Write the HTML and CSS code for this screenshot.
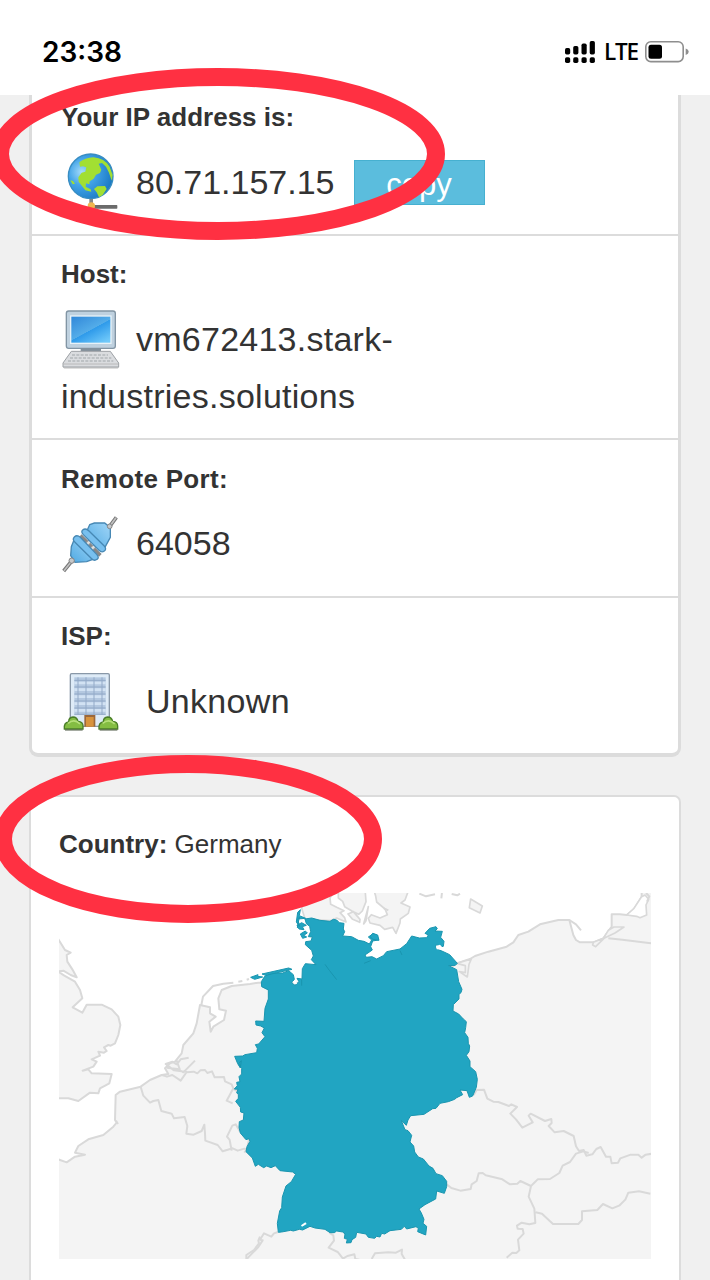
FILE: index.html
```html
<!DOCTYPE html>
<html lang="en">
<head>
<meta charset="utf-8">
<title>IP address</title>
<link rel="stylesheet" href="styles.css">
</head>
<body>
<header class="status">
  <span class="time">23:38</span>
  <div class="indicators">
    <svg class="signal" viewBox="0 0 31 22">
      <g fill="#000"><rect x="0" y="7" width="5.200" height="6.500" rx="1.700"/><rect x="8.200" y="5" width="5.200" height="8.500" rx="1.700"/><rect x="16.500" y="2.500" width="5.200" height="11" rx="1.700"/><rect x="24.700" y="0" width="5.200" height="13.500" rx="1.700"/><rect x="0" y="16.300" width="5.200" height="5.700" rx="1.700"/><rect x="8.200" y="16.300" width="5.200" height="5.700" rx="1.700"/><rect x="16.500" y="16.300" width="5.200" height="5.700" rx="1.700"/><rect x="24.700" y="16.300" width="5.200" height="5.700" rx="1.700"/></g>
    </svg>
    <span class="network">LTE</span>
    <svg class="battery" viewBox="0 0 44 22">
      <rect x=".8" y=".8" width="37.400" height="19.800" rx="5" fill="none" stroke="#8e8e8e" stroke-width="1.600"/>
      <rect x="3.500" y="3.700" width="13.500" height="14" rx="2.500"/><path d="M40.700 7.500q3 1 3 3.300t-3 3.300z" fill="#8e8e8e"/>
    </svg>
  </div>
</header>
<main class="content">
  <section class="card details">
    <div class="row row-first">
      <h2>Your IP address is:</h2>
      <div class="value">
        <svg class="icon" viewBox="183 461 180 180">
          <defs><radialGradient id="ocean" cx=".3" cy=".4" r=".75"><stop offset="0" stop-color="#a5dcfa"/><stop offset=".4" stop-color="#43a4e8"/><stop offset="1" stop-color="#1675c0"/></radialGradient></defs>
          <path d="M268 598h11v16h-11z" fill="#858585"/><rect x="268" y="617" width="84" height="11" rx="2" fill="#6b6b6b"/><circle cx="274" cy="620" r="11" fill="#f0b64e"/>
          <circle cx="272" cy="531" r="67" fill="url(#ocean)" stroke="#398dc1" stroke-width="4"/>
          <path d="M238 489q17-14 42-15 34 3 49 28l9 25-3 17-8-24-9-18-12-11-10 2 8 18-4 10-12 5-7 12-12 8-1 9-10-3-1 10 15 8 2 7-18-4-10-13-10-13-1-13 10-14 11-3 3-13-10-3-9 1z" fill="#a2df32"/>
          <path d="M282 569l10-8 23-1 5 9-12 18-11 7-7-15zM211 543l8 2 6 8-7 2z" fill="#a2df32"/>
        </svg>
        <span>80.71.157.15</span>
        <button class="copy">copy</button>
      </div>
    </div>
    <div class="row row-host">
      <h2>Host:</h2>
      <div class="value">
        <svg class="icon" viewBox="33 34 180 180">
          <defs><linearGradient id="screen" x2=".8" y2="1"><stop offset="0" stop-color="#2f86d8"/><stop offset=".55" stop-color="#54ade9"/><stop offset=".56" stop-color="#2e9aea"/><stop offset="1" stop-color="#70c9fa"/></linearGradient></defs>
          <path d="M38 205l5 5h160l5-5z" fill="#aaa" opacity=".5"/>
          <rect x="49" y="37" width="147" height="112" rx="7" fill="#bfd1df" stroke="#8295a4" stroke-width="4"/>
          <rect x="62" y="52" width="121" height="82" fill="url(#screen)" stroke="#e8f2f8" stroke-width="4"/>
          <path d="M92 149h61v9H92z" fill="#83909b"/>
          <path d="M64 158h117l25 35v12H39v-12z" fill="#dadcdf" stroke="#9da1a5" stroke-width="3"/>
          <path d="M66 169h108M60 178h124M54 187h136" stroke="#b4b8bc" stroke-width="5" stroke-dasharray="9 4"/><path d="M40 196h166" stroke="#aaa" stroke-width="2"/>
        </svg>
        <span class="host-name">vm672413.stark-</span>
      </div>
      <div class="value host-name">industries.solutions</div>
    </div>
    <div class="row row-port">
      <h2>Remote Port:</h2>
      <div class="value">
        <svg class="icon" viewBox="33 17 180 180">
          <defs><linearGradient id="plug" x1=".1" y1=".9" x2=".9" y2=".1"><stop offset="0" stop-color="#58aee5"/><stop offset="1" stop-color="#98d1f5"/></linearGradient></defs>
          <path d="M41 188l22-27M179 54l20-27" stroke="#777" stroke-width="11"/><path d="M42 187l21-26M180 53l18-25" stroke="#c1c1c1" stroke-width="5"/>
          <path d="M91 82l60 59" stroke="#888" stroke-width="11"/>
          <path d="M104 114l26-25M118 128l26-24" stroke="#999" stroke-width="13"/><path d="M106 112l24-22M120 126l23-21" stroke="#e0e0df" stroke-width="7"/>
          <path d="M119 49l14-5h31l17 14v29l-13 24-7 13-52-53z" fill="url(#plug)" stroke="#4788b4" stroke-width="4"/>
          <path d="M98 65q9-7 19 3l45 44q9 10 1 16-8 6-16-2l-47-47q-8-9-2-14z" fill="#78c0ef" stroke="#4788b4" stroke-width="4"/>
          <path d="M72 95l-8 20-2 27 13 20 35-2 24-9z" fill="url(#plug)" stroke="#4788b4" stroke-width="4"/>
          <path d="M73 86q8-8 18 1l49 51q9 10 1 15-8 6-16-2l-50-49q-9-9-2-16z" fill="#78c0ef" stroke="#4788b4" stroke-width="4"/>
          <circle cx="65" cy="157" r="8" fill="#c6c8ca" stroke="#858585" stroke-width="3"/><circle cx="179" cy="54" r="7" fill="#c6c8ca" stroke="#858585" stroke-width="3"/>
        </svg>
        <span>64058</span>
      </div>
    </div>
    <div class="row row-isp">
      <h2>ISP:</h2>
      <div class="value">
        <svg class="icon" viewBox="33 22 180 180">
          <rect x="61" y="27" width="117" height="158" rx="4" fill="#deebf7" stroke="#8998a8" stroke-width="4"/>
          <rect x="73" y="38" width="94" height="112" fill="#b4c8e0"/>
          <path d="M73 55h94M73 75h94M73 96h94M73 117h94M73 137h94" stroke="#d2e2f3" stroke-width="8"/>
          <path d="M73 47h94M73 67h94M73 88h94M73 109h94M73 130h94M73 149h94M84 38v112M108 38v112M132 38v112M156 38v112" stroke="#93aac8" stroke-width="3"/>
          <rect x="103" y="151" width="33" height="35" fill="#9b683b"/><rect x="108" y="157" width="23" height="29" fill="#d8933d"/>
          <g fill="#84bd43" stroke="#4a7e28" stroke-width="4"><path d="M43 193q-2-19 13-21 0-14 13-15 12 0 15 13 15 1 15 14v9z"/><path d="M147 193q-2-19 13-21 0-14 13-15 12 0 15 13 15 1 15 14v9z"/></g>
          <path d="M54 176q19-16 36 2M158 176q19-16 36 2" fill="none" stroke="#b5df79" stroke-width="5"/><path d="M45 196h53M149 196h53" stroke="#4c5845" stroke-width="3"/>
        </svg>
        <span class="isp-name">Unknown</span>
      </div>
    </div>
  </section>
  <section class="card location">
    <p class="country"><b>Country:</b> Germany</p>
    <svg class="map" viewBox="59 893 592 366">
      <rect x="59" y="893" width="592" height="366" fill="#f4f4f4"/>
      <g transform="translate(230 885) scale(.33333)" stroke-linejoin="round">
        <!-- North Sea, Channel and Baltic -->
        <path fill="#fff" stroke="#d9d9d9" stroke-width="6" d="M-560-30V100L-515 163-495 195-478 203-490 210-488 230-473 253-460 277-478 270-500 257-540 263-540 260-515 260-497 272-465 290-450 315-443 340-472 367-443 383-430 359-385 359-355 373-335 395-329 420-335 450-345 475-358 482-365 480-378 487-370 498-378 503-395 500-390 512-415 523-400 530-410 545-442 557-425 553-415 565-355 567-362 595-390 610-395 625-420 623-455 648-485 640-560 640V823H-515L-490 832-465 815-435 809-465 803-455 783-425 763-380 750-350 725-340 713-345 705-343 630-330 620-268 605-240 585-205 570-185 567-195 550-180 535-165 530-145 505-140 480-110 445-100 415-90 360-60 367-60 385-43 395-62 410-58 440-50 425-18 405-12 377-32 373-35 340-25 315 5 303 60 297 85 293H300L600 300 680 235 720 222 735 213 775 200 830 185 850 172 865 150 895 140 930 118 985 105H1018L1030 150 1038 165 1050 172H1090L1120 160 1145 125V88H1170L1190 90 1210 75 1235 35V-30Z"/>
        <path d="M-86 360l5-25 30-32 31-7 30-3M25 290l12-2M50 284l7-2" fill="none" stroke="#d9d9d9" stroke-width="6"/>
        <path fill="#f4f4f4" stroke="#d9d9d9" stroke-width="5" d="M215 70L235 10H322L300 38 302 58 320 67 342 77 330 83 344 98 348 111 320 99 300 107 225 102ZM325 10H405L408 50 397 78 386 88 367 79 344 65 338 49 325 39ZM430 10H538L525 45 513 54 540 66 535 85 511 102 510 114 498 145 488 127 464 133 450 121 420 114 415 100 424 89 450 99 472 89 465 72 440 51 437 33ZM354 87L370 80 390 103 389 112 368 103ZM415 65L401 117 408 107ZM1090 172L1120 160 1135 136 1152 126 1182 126 1155 144 1122 160 1097 185 1088 180ZM722 42L757 63 750 84 718 68ZM680 235L724 222 717 238 712 276 688 260 706 263 706 242Z"/>
        <path fill="#fff" stroke="#d9d9d9" stroke-width="5" d="M1190 90L1220 94 1230 98 1250 90 1248 60 1256 43 1245 30 1235 35 1212 70Z"/>
        <path fill="none" stroke="#d9d9d9" stroke-width="6" d="M1018 105l20 13 15 18M1135 160l42 4 86 11M1248 24l10 10-7 16M568 26l20 8 27-6M665 27l17 4 8-5M462 70l13 6M636 22l-2 18"/>
      </g>
      <g fill="none" stroke="#d9d9d9" stroke-width="6" stroke-linejoin="round">
        <!-- Benelux and French borders -->
        <path transform="translate(50 1060) scale(.33333)" d="M272 80l8 27 20 21 10-5 15-3 9 33 31 8 7 14 32-4 8 27-3 23 22 3 24-11 8-19 2 27 1 21 37 13 15 19 30-9 15 7 20-6 24 4M545 272l-6-32-8-10 16-33 10-4 12 20 28 24-6 31-8 10M410 37l21-2 11 5 9-9 14-1 7 9 14-5 8 18 28-1 3 13 20 9 5 12-20 37 18 8M550 86l12 8M336 45l15 5 16-5 25 17 18-26-38-5-25-19 20-7 13 8 12-15 24-5M350 23l33 4 17 10 35-35M380 2l10 28M198 182l6 10M630 530l-5 12 2 8-15 20-23 15v12"/>
        <!-- Central European borders -->
        <path transform="translate(440 1060) scale(.33333)" d="M101 105l9-15 22-1 10 27 18 9 15 1 32 12 7-5 17 8-20 20 17 17 19 25 31-16-12-20 6-6 43 22 19-6 1 12-9 9 18 19 27-4 30 15 7 31 9 14 14-3 8 17 18-4 12-16 13-6 16 29h13l4 20 19-2 7-13 31-11h23l10 9 12-9 20-3M20 373l14 11 27 8 31-5 3-14 15-10 6-23 12-1 9 7 50 12 23 15 22-2 9-8 32 15 20-20 37-1 28-18 10-22 22-11 18-25 22-7 16 5M273 378l-7 32 17 36 3 43-18 4-23-5-14 9 2 9 15 1 3 14-17 18 4 32-9 8-12-1-17 15M287 457l19 4 33 31h76l11-12v-26l46-4 17-18 28 13 22-9 17-17 9-21 32-4 34 7"/>
        <path transform="translate(230 1060) scale(.33333)" d="M144 516l-12 4-8 10-22-10-12 19 8 2-13 20-34 35M298 518l12 8 2 16-16 21 27 13 16 20 13-8 21-5 3 14 12 2M425 597l10-17 40-3 23 1 18-9-1 13 10 17"/>
      </g>
      <g transform="translate(230 885) scale(.33333)" fill="#21a5c2" stroke="#1995af" stroke-width="3" stroke-linejoin="round">
        <path d="M225 102L245 99 270 106 300 109 310 103 320 105 328 113 342 115 340 132 344 140 338 153 365 155 385 166 402 169 418 177 425 165 415 156 430 146 441 152 445 165 428 168 422 185 427 195 405 210 409 217 426 215 440 222 460 212 470 200 510 192 530 176 545 153 568 159 590 158 595 150 585 145 599 130 618 125 622 131 615 138 637 139 632 157 642 169 640 184 630 186 619 178 617 190 642 201 659 209 682 235 676 241 656 242 680 254 686 290 696 313 693 323 687 328 687 342 670 359 669 378 686 387 700 402 709 410 707 428 704 443 714 457 715 475 719 483 717 500 709 511 720 528 720 545 737 560 742 583 739 607 728 633 718 637 711 617 690 615 698 629 680 638 674 643 655 650 630 655 618 670 608 671 582 688 542 692 534 705 529 721 514 707 525 734 534 737 545 751 540 771 551 783 554 801 565 816 580 822 597 843 609 850 618 866 637 872 650 889 650 905 643 925 620 918 617 942 585 959 567 972 574 984 582 1003 579 1015 590 1024 587 1050 563 1040 565 1030 558 1025 530 1032 523 1024 514 1033 480 1037 464 1047 455 1045 450 1056 440 1054 434 1060 415 1057 408 1047 380 1042 377 1057 366 1064 363 1073 349 1074 352 1063 343 1060 345 1047 338 1041 320 1038 313 1043 300 1043 285 1033 255 1029 240 1024 218 1035 208 1033 190 1038 182 1036 155 1041 145 1042 142 1015 149 978 155 968 157 936 168 903 184 890 197 868 188 861 150 857 136 842 123 848 110 843 101 848 85 838 76 844 67 819 48 800 51 785 60 769 57 761 48 764 31 744 27 727 28 710 40 705 42 684 32 681 31 667 17 649 25 640 25 628 20 624 24 613 13 612 22 602 20 592 30 590 27 575 35 567 35 550 26 536 34 527 31 549 23 536 14 514 38 513 45 509 80 503 82 490 76 479 86 477 105 455 96 443 103 429 92 423 78 420 77 408 102 409 105 370 115 342 115 315 95 305 94 290 104 274 126 264 158 264 176 257 190 269 193 283 185 293 195 301 207 290 201 280 216 282 217 251 226 236 258 239 244 224 250 213 245 196 226 179 227 170 243 168 247 156 235 155 242 140 239 124 229 116Z"/>
        <path d="M211 74l-3 18 19 8-23 2 4 22-9-13 4-29zM201 121l14-8 14 8-12 4 5 9-15-2zM211 147l15-9 6 6-11 7 9 5-12 4zM62 277l22-8-1 5 15 2-24 7zM96 267l80-18 10 4-79 18zM420 155l8-10 15 5 4 16-18-3z"/>
        <path d="M208 96l-6 33M285 238l13 18 22 28M215 302v-18M402 235l20-8M516 210l-6-13" fill="none"/>
        <path d="M213 1021l13-9 4 5-14 8zM232 204l8-1 1 11-10-1zM188 288h11l2 9-10-1zM618 183l12-4 14 16-24-2z" fill="#fff" stroke="none"/>
      </g>
    </svg>
  </section>
</main>
<svg class="marks" viewBox="0 0 710 1280">
  <g fill="none" stroke="#ff3042" stroke-width="18"><ellipse cx="218" cy="154" rx="218" ry="77"/><ellipse cx="188" cy="839" rx="185" ry="75"/></g>
</svg>
</body>
</html>
```
FILE: styles.css
```css
* { box-sizing: border-box; }
body {
  margin: 0;
  height: 1280px;
  overflow: hidden;
  position: relative;
  background: #f0f0f0;
  color: #333;
  font-family: "Liberation Sans", Arial, sans-serif;
}
.status {
  height: 95px;
  padding: 8px 21px 0 42px;
  display: flex;
  justify-content: space-between;
  align-items: center;
  background: #fff;
  color: #000;
  font-family: Inter, sans-serif;
}
.time { font-size: 28px; font-weight: 600; letter-spacing: 0; }
.indicators { display: flex; align-items: center; }
.signal { width: 31px; height: 22px; margin-right: 8px; }
.network { width: 33px; margin-right: 8px; font-size: 22.5px; font-family: "Open Sans", sans-serif; font-weight: 600; letter-spacing: -1.2px; line-height: 28px; }
.battery { width: 44px; height: 22px; }
.content { padding: 0 29px; }
.card { background: #fff; border: solid #dcdcdc; }
.details {
  height: 662px;
  border-width: 0 3px 4px;
  border-radius: 0 0 9px 9px;
}
.row { padding: 23px 29px 0; border-bottom: 2px solid #dcdcdc; }
.row-first { height: 141px; padding-top: 7px; }
.row-host { height: 204px; }
.row-port { height: 158px; padding-top: 24px; }
.row-port h2 { letter-spacing: .3px; }
.row-port .value { margin-top: -1px; }
.row-isp { height: 155px; border-bottom: 0; }
h2 { margin: 0 0 22px; font-size: 26px; line-height: 30px; font-weight: 700; }
.value { display: flex; align-items: center; height: 57px; font-size: 34px; line-height: 57px; }
.icon { width: 60px; height: 60px; margin-right: 15px; flex: none; }
.host-name { letter-spacing: .25px; }
.isp-name { margin-left: 10px; letter-spacing: .3px; }
.copy {
  width: 131px;
  height: 45px;
  margin-left: 19px;
  padding: 4px 0 0;
  border: 1px solid #46b0d0;
  background: #5bbddd;
  color: #fff;
  font: 31px/36px "Liberation Sans", Arial, sans-serif;
}
.location {
  height: 540px;
  margin-top: 38px;
  padding: 32px 28px 0;
  border-width: 2px;
  border-radius: 7px;
}
.country { margin: 0 0 34px; font-size: 26px; line-height: 30px; }
.map { display: block; width: 592px; height: 366px; }
.marks { position: absolute; inset: 0; width: 710px; height: 1280px; pointer-events: none; }
```
